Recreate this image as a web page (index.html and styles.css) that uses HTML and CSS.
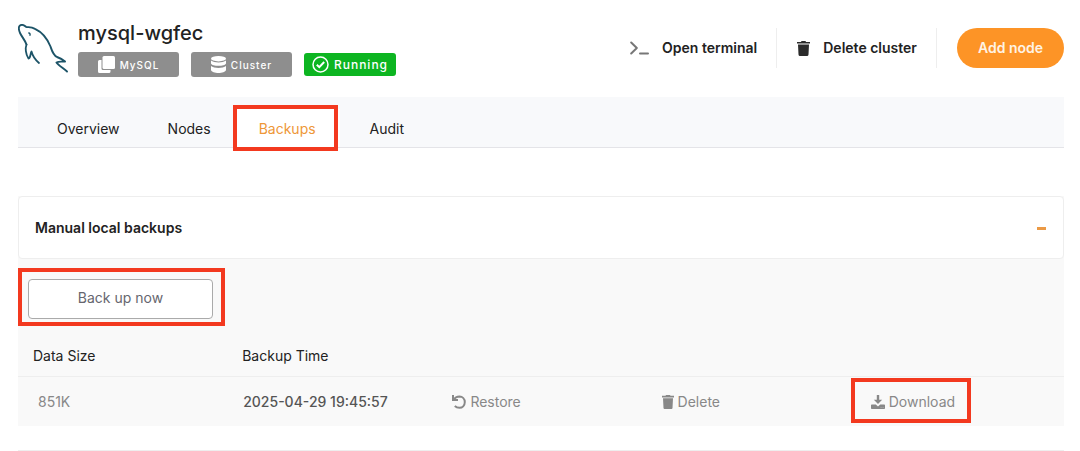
FILE: index.html
```html
<!DOCTYPE html>
<html lang="en">
<head>
  <meta charset="UTF-8" />
  <title>mysql-wgfec | Backups</title>
  <meta name="viewport" content="width=device-width, initial-scale=1.0" />
  <link rel="stylesheet" href="styles.css">
</head>
<body>
  <main class="page">
    <header class="cluster-header">
      <svg class="logo" viewBox="0 0 50 50" fill="none" stroke="#1d5468" stroke-linecap="round" stroke-linejoin="round">
        <path stroke-width="1.9" d="M8.500 20.500C7.500 17 4 13 2 9C.8 6 .6 2.500 2 1.500C3.500 .5 6 1 8 2.800C10 3.400 13 2.800 17 4.800C25 8.500 29.500 15 32.500 22.500C34 27 35 31 39 33C43 34.500 45 35.500 47 37.500C44 38 41 37 38.500 38.500C40 41 45 44 49 47.500"/>
        <path stroke-width="1.800" d="M8.500 20.500C7.200 24 7.500 30 10.500 34.500C12.800 34 12 30 13.500 27.500C14.500 31.500 17.500 36 21 39"/>
        <path stroke-width="1.400" d="M10.800 9C11.800 9 12.300 10 12 11.200"/>
      </svg>
      <div class="cluster-info">
        <h1>mysql-wgfec</h1>
        <div class="badges">
          <span class="badge">
            <svg width="17" height="17" viewBox="0 0 17 17" fill="#fff"><rect x="4.500" y="0" width="12.500" height="13" rx="1.500"/><path d="M1.500 4H3.500V12.500Q3.500 14 5 14H12.500V15.500Q12.500 17 11 17H1.500Q0 17 0 15.500V5.500Q0 4 1.500 4Z"/></svg>
            MySQL
          </span>
          <span class="badge">
            <svg width="15" height="17" viewBox="0 0 15 17" fill="#fff"><ellipse cx="7.500" cy="2.700" rx="7.500" ry="2.700"/><path d="M0 4.500C3 7 12 7 15 4.500V7.500C14 10.600 1 10.600 0 7.500Z"/><path d="M0 10C3 12.500 12 12.500 15 10V14C14 18 1 18 0 14Z"/></svg>
            Cluster
          </span>
          <span class="badge badge-running">
            <svg width="17" height="17" viewBox="0 0 17 17" fill="none" stroke="#fff" stroke-width="1.500"><circle cx="8.500" cy="8.500" r="7.500"/><path stroke-width="2" d="M4.800 8.800L7.300 11.200L12.200 6"/></svg>
            Running
          </span>
        </div>
      </div>
      <div class="actions">
        <button class="action" type="button">
          <svg width="19" height="14" viewBox="0 0 19 14" fill="none" stroke="#777" stroke-width="2" stroke-linecap="round" stroke-linejoin="round"><path d="M1.200 1.500L6.800 7L1.200 12.500M10 12.500H18"/></svg>
          Open terminal
        </button>
        <button class="action" type="button">
          <svg width="13" height="15" viewBox="0 0 13 15" fill="#2b2b2b"><path d="M0 1H4L4.500 0H8.500L9 1H13V2.500H0ZM1 3.500H12L11.500 13.500Q11.400 15 10 15H3Q1.600 15 1.500 13.500Z"/></svg>
          Delete cluster
        </button>
        <button class="add-btn" type="button">Add node</button>
      </div>
    </header>

    <nav class="tabs">
      <a class="tab" href="#overview">Overview</a>
      <a class="tab" href="#nodes">Nodes</a>
      <a class="tab active callout" href="#backups">Backups</a>
      <a class="tab" href="#audit">Audit</a>
    </nav>

    <section class="panel">
      <div class="panel-header">
        <h2>Manual local backups</h2>
        <button class="collapse-btn" type="button" aria-label="Collapse"></button>
      </div>
      <div class="panel-body">
        <div class="callout backup-action">
          <button class="backup-btn" type="button">Back up now</button>
        </div>
        <table class="backups">
          <thead>
            <tr>
              <th>Data Size</th>
              <th>Backup Time</th>
              <th></th>
              <th></th>
              <th></th>
            </tr>
          </thead>
          <tbody>
            <tr>
              <td class="size">851K</td>
              <td class="time">2025-04-29 19:45:57</td>
              <td>
                <button class="row-btn" type="button">
                  <svg width="14" height="14" viewBox="0 0 14 14" fill="none" stroke="#888" stroke-width="2"><path d="M1 0V5H6M1.500 4.800C3 2.300 5.500 1.400 7.500 1.400C10.500 1.500 12.800 4 12.800 7C12.800 10.500 10.300 12.800 7.500 12.800C5.500 12.800 4 12.200 2.800 11"/></svg>
                  Restore
                </button>
              </td>
              <td>
                <button class="row-btn" type="button">
                  <svg width="12" height="14" viewBox="0 0 12 14" fill="#888"><path d="M0 .8H3.500L4 0H8L8.500 .8H12V2.500H0ZM1 3.200H11L10.500 13Q10.400 14 9.500 14H2.500Q1.600 14 1.500 13Z"/></svg>
                  Delete
                </button>
              </td>
              <td>
                <button class="row-btn callout" type="button">
                  <svg width="14" height="14" viewBox="0 0 14 14" fill="#888"><path d="M5.800 0H8.200V4.800H11.200L7 9L2.800 4.800H5.800ZM0 10.300Q0 9.500 .8 9.500H4.800L7 11.500L9.200 9.500H13.200Q14 9.500 14 10.300V13.200Q14 14 13.200 14H.8Q0 14 0 13.200ZM9.700 12.600H10.400V12H9.700ZM11.700 12.600H12.400V12H11.700Z" fill-rule="evenodd"/></svg>
                  Download
                </button>
              </td>
            </tr>
          </tbody>
        </table>
      </div>
    </section>
    <hr class="divider">
  </main>
</body>
</html>
```
FILE: styles.css
```css
:root {
  --orange: #fd9426;
  --callout: #f3391f;
  --gray: #888;
}

* {
  box-sizing: border-box;
}

body {
  margin: 0;
  font-family: Inter, 'Liberation Sans', sans-serif;
  font-size: 14px;
  line-height: 20px;
  color: #222;
  background: #fff;
}

button {
  font: inherit;
  color: inherit;
  background: none;
  border: none;
  padding: 0;
  cursor: pointer;
}

svg {
  flex: none;
}

.page {
  padding: 20px 16px 0 18px;
}

/* Header */
.cluster-header {
  display: flex;
  align-items: flex-start;
  padding-bottom: 20px;
}

.logo {
  width: 50px;
  height: 50px;
  margin: 4px 10px 0 0;
}

h1 {
  margin: 0 0 6px;
  font-size: 20px;
  line-height: 26px;
  font-weight: 500;
}

.badges {
  display: flex;
  align-items: center;
  gap: 12px;
}

.badge {
  display: flex;
  align-items: center;
  justify-content: center;
  gap: 5px;
  width: 101px;
  height: 25px;
  border-radius: 3px;
  background: #8e8e8e;
  color: #fff;
  font-size: 10px;
  font-weight: 500;
  letter-spacing: 1px;
}

.badge-running {
  width: 92px;
  height: 23px;
  background: #0db521;
  font-size: 12px;
}

.actions {
  display: flex;
  align-items: center;
  margin: 8px 0 0 auto;
}

.action {
  display: flex;
  align-items: center;
  gap: 13px;
  height: 40px;
  padding: 0 19px 0 20px;
  border-right: 1px solid #eee;
  font-weight: 600;
}

.add-btn {
  height: 40px;
  margin-left: 20px;
  padding: 0 21px;
  border-radius: 20px;
  background: var(--orange);
  color: #fff3e4;
  font-weight: 600;
}

/* Tabs */
.tabs {
  display: flex;
  padding: 12px 15px 0;
  background: #f8f9fb;
  border-bottom: 1px solid #e4e4e8;
}

.tab {
  padding: 10px 24px 8px;
  color: #222;
  text-decoration: none;
}

.tab.active {
  margin-right: 6px;
  background: #fff;
  color: #ee9738;
}

/* Red frame drawn over the control it points at */
.callout {
  position: relative;
}

.callout::after {
  content: "";
  position: absolute;
  inset: -4px 2px -4px -2px;
  border: 4px solid var(--callout);
  pointer-events: none;
}

/* Panel */
.panel {
  margin-top: 48px;
  background: #f9f9f9;
}

.panel-header {
  display: flex;
  align-items: center;
  justify-content: space-between;
  padding: 21px 17px 20px 16px;
  border: 1px solid #eee;
  border-radius: 4px;
  background: #fff;
}

h2 {
  margin: 0;
  font-size: 14px;
  line-height: 20px;
  font-weight: 600;
}

.collapse-btn {
  width: 9px;
  height: 3px;
  background: #eb9a45;
}

.panel-body {
  padding-top: 9px;
}

.backup-action {
  width: 207px;
  padding: 11px 12px 7px 10px;
}

.backup-action::after {
  inset: 0;
}

.backup-btn {
  width: 100%;
  height: 40px;
  padding-bottom: 2px;
  border: 1px solid #aaa;
  border-radius: 4px;
  background: #fff;
  color: #66666e;
}

.backups {
  width: 100%;
  table-layout: fixed;
  border-collapse: collapse;
}

.backups th {
  padding: 20px 15px 10px;
  border-bottom: 1px solid #eee;
  font-weight: 400;
  text-align: left;
}

.backups td {
  padding: 15px 16px 14px;
  color: var(--gray);
}

.backups .size {
  padding-left: 20px;
}

.backups .time {
  color: #555;
  font-weight: 500;
}

.row-btn {
  display: flex;
  align-items: center;
  gap: 4px;
}

.row-btn.callout::after {
  inset: -14px -16px -11px -20px;
}

.divider {
  margin: 24px 0 0;
  border: none;
  border-top: 1px solid #eee;
}
```
